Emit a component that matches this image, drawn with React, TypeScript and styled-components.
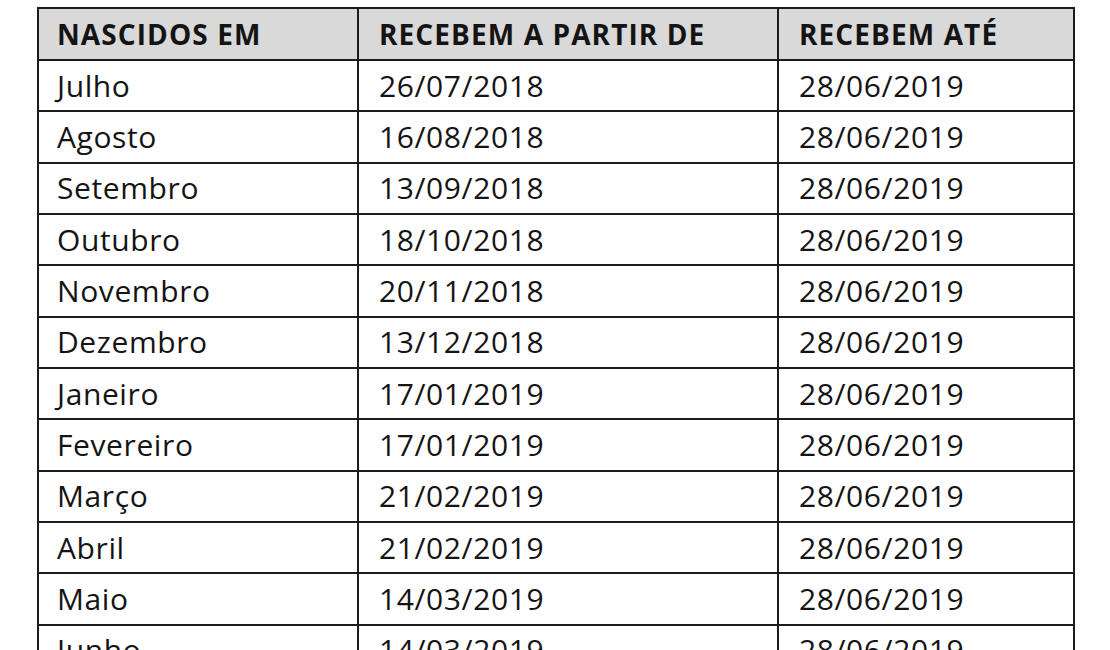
import React from "react";
import styled, { createGlobalStyle } from "styled-components";

const GlobalStyle = createGlobalStyle`
  html, body {
    margin: 0;
    padding: 0;
    background: #ffffff;
    overflow: hidden;
  }
  body {
    font-family: "Open Sans", "Liberation Sans", sans-serif;
  }
`;

const Page = styled.div`
  padding: 7px 0 0 37px;
  width: 1110px;
  height: 650px;
  box-sizing: border-box;
  overflow: hidden;
`;

const Table = styled.table`
  border-collapse: collapse;
  width: 1036px;
  table-layout: fixed;
  color: #141414;
`;

const HeadCell = styled.th<{ $w: number }>`
  width: ${(p) => p.$w}px;
  height: 52px;
  padding: 0 0 0 ${(p) => (p.$w === 320 ? 18 : 20)}px;
  box-sizing: border-box;
  border: 2px solid #1c1c1c;
  background: #d9d9d9;
  text-align: left;
  font-weight: 700;
  font-size: 28px;
  letter-spacing: 1.1px;
  vertical-align: middle;
  white-space: nowrap;
`;

const Row = styled.tr`
  height: 51.35px;
`;

const Cell = styled.td<{ $first?: boolean }>`
  padding: 0 0 1px ${(p) => (p.$first ? 18 : 20)}px;
  box-sizing: border-box;
  border: 2px solid #1c1c1c;
  font-size: 30px;
  letter-spacing: 0.6px;
  vertical-align: middle;
  white-space: nowrap;
`;

const rows: [string, string, string][] = [
  ["Julho", "26/07/2018", "28/06/2019"],
  ["Agosto", "16/08/2018", "28/06/2019"],
  ["Setembro", "13/09/2018", "28/06/2019"],
  ["Outubro", "18/10/2018", "28/06/2019"],
  ["Novembro", "20/11/2018", "28/06/2019"],
  ["Dezembro", "13/12/2018", "28/06/2019"],
  ["Janeiro", "17/01/2019", "28/06/2019"],
  ["Fevereiro", "17/01/2019", "28/06/2019"],
  ["Março", "21/02/2019", "28/06/2019"],
  ["Abril", "21/02/2019", "28/06/2019"],
  ["Maio", "14/03/2019", "28/06/2019"],
  ["Junho", "14/03/2019", "28/06/2019"],
];

export default function App() {
  return (
    <>
      <GlobalStyle />
      <Page>
        <Table>
          <thead>
            <tr>
              <HeadCell $w={320}>NASCIDOS EM</HeadCell>
              <HeadCell $w={420}>RECEBEM A PARTIR DE</HeadCell>
              <HeadCell $w={296}>RECEBEM ATÉ</HeadCell>
            </tr>
          </thead>
          <tbody>
            {rows.map(([m, a, b]) => (
              <Row key={m}>
                <Cell $first>{m}</Cell>
                <Cell>{a}</Cell>
                <Cell>{b}</Cell>
              </Row>
            ))}
          </tbody>
        </Table>
      </Page>
    </>
  );
}
